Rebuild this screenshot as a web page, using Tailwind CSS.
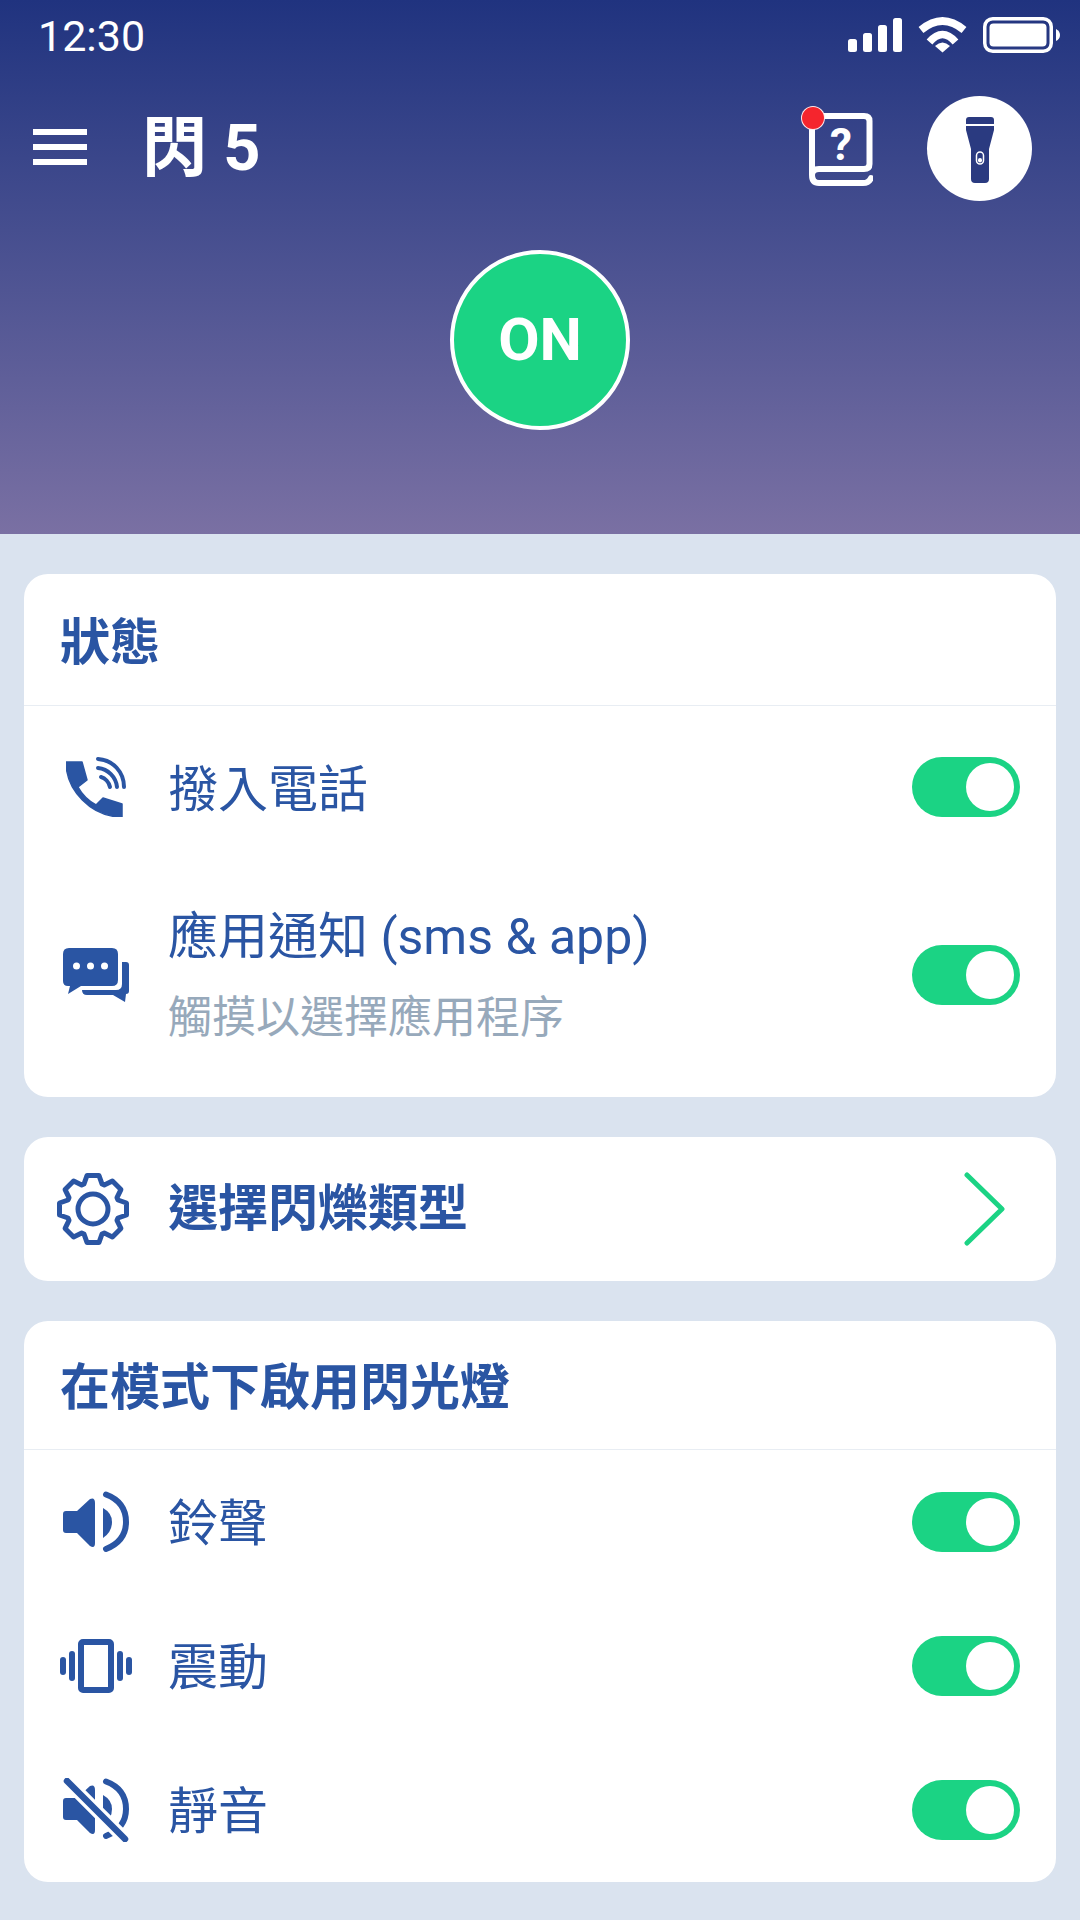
<!DOCTYPE html>
<html lang="zh-Hant">
<head>
    <meta charset="UTF-8">
    <meta name="viewport" content="width=device-width, initial-scale=1.0">
    <title>閃 5</title>
    <script src="https://cdn.jsdelivr.net/npm/@tailwindcss/browser@4"></script>
</head>
<body class="w-[1080px] h-[1920px] overflow-hidden bg-[#dae3ef] text-[#2a55a3] font-['Roboto','Noto_Sans_CJK_TC',sans-serif]">

    <!-- Header -->
    <header class="h-[534px] flex flex-col bg-linear-to-b from-[#20337f] to-[#7a70a3] text-white">
        <!-- Status bar -->
        <div class="h-[68px] flex items-center justify-between pl-[38px] pr-[20px]">
            <span class="pt-[5px] text-[43px] leading-none">12:30</span>
            <div class="flex items-center pt-[2px]">
                <svg width="54" height="34" viewBox="0 0 54 34" fill="#fff">
                    <rect x="0" y="21" width="9" height="13" rx="2.5"/>
                    <rect x="15" y="15" width="9" height="19" rx="2.5"/>
                    <rect x="30" y="7" width="9" height="27" rx="2.5"/>
                    <rect x="45" y="0" width="9" height="34" rx="2.5"/>
                </svg>
                <svg class="ml-[16px]" width="49" height="36" viewBox="0 0 49 36" fill="none" stroke="#fff" stroke-width="7.500" stroke-linejoin="round">
                    <path d="M3 13 Q24.500 -5 46 13"/>
                    <path d="M11.500 25 Q24.500 10 37.500 25"/>
                    <path d="M17 29 Q24.500 22 32 29 L24.500 35.500Z" fill="#fff" stroke="none"/>
                </svg>
                <svg class="ml-[16px]" width="77" height="36" viewBox="0 0 77 36">
                    <rect x="1.750" y="1.750" width="66.500" height="32.500" rx="8" fill="none" stroke="#fff" stroke-width="3.500"/>
                    <rect x="6.500" y="6.500" width="57" height="23" rx="4" fill="#fff"/>
                    <path d="M73 12 Q77 14 77 18 Q77 22 73 24Z" fill="#fff"/>
                </svg>
            </div>
        </div>

        <!-- Toolbar -->
        <div class="mt-[28px] h-[105px] flex items-center pl-[33px] pr-[48px]">
            <button class="w-[54px] mb-[3px] flex flex-col gap-[9px]">
                <span class="h-[6px] bg-white"></span>
                <span class="h-[6px] bg-white"></span>
                <span class="h-[6px] bg-white"></span>
            </button>
            <h1 class="ml-[55px] text-[65px] font-bold leading-none">閃 5</h1>
            <div class="ml-auto relative w-[64px] h-[73px] mt-[2px] mr-[54px]">
                <svg width="64" height="73" viewBox="0 0 64 73" fill="none" stroke="#fff" stroke-width="6" stroke-linecap="round">
                    <path d="M3 8 V62 M8 3 H55 Q60.500 3 60.500 8 V51 Q60.500 56 55 56 H10 Q3 56 3 62 Q3 70 10 70 H54 Q60 70 62 65"/>
                </svg>
                <span class="absolute left-[16px] top-[7px] w-[32px] text-center text-[44px] font-bold leading-[50px]">?</span>
                <span class="absolute left-[-8px] top-[-7px] w-[24px] h-[24px] rounded-full bg-[#f5252d] border border-white/90"></span>
            </div>
            <button class="w-[105px] h-[105px] rounded-full bg-white flex items-center justify-center">
                <svg class="mt-[3px]" width="28" height="66" viewBox="0 0 28 66" fill="#2a3a80">
                    <path d="M0 3 Q0 0 3 0 H25 Q28 0 28 3 V7 H0Z"/>
                    <path d="M0 9 H28 V13 L23 32 V62 Q23 66 19 66 H9 Q5 66 5 62 V32 L0 13Z"/>
                    <rect x="10.500" y="35" width="7" height="12" rx="3.500" fill="none" stroke="#fff" stroke-width="1.500"/>
                    <rect x="12" y="41" width="4" height="4.500" rx="2" fill="#fff"/>
                </svg>
            </button>
        </div>

        <!-- Master switch -->
        <button class="mt-[49px] mx-auto w-[180px] h-[180px] rounded-full bg-[#1bd384] border-[4px] border-white text-[60px] font-bold">ON</button>
    </header>

    <main class="px-[24px] pt-[40px] flex flex-col gap-[40px]">
        <!-- 狀態 -->
        <section class="bg-white rounded-[24px] pb-[15px]">
            <h2 class="h-[132px] flex items-center pl-[36px] pt-[8px] border-b border-[#e8edf3] text-[50px] font-bold">狀態</h2>
            <div class="h-[162px] flex items-center pr-[36px]">
                <div class="w-[144px] pl-[42px]">
                    <svg width="60" height="60" viewBox="0 0 60 60" fill="#2a55a3">
                        <path d="M0 5 H16 L21 23 L12 30 Q18 41 30 48 L37 41 L56 47 V60 C25 60 0 33 0 5Z" stroke="#2a55a3" stroke-width="1.500" stroke-linejoin="round"/>
                        <g fill="none" stroke="#2a55a3" stroke-width="4" stroke-linecap="round">
                            <path d="M32 2 C47 3 58 15 58 30"/>
                            <path d="M32 11 C42 12 50 20 51 30"/>
                            <path d="M35 20 C39 21 43 25 44 30"/>
                        </g>
                    </svg>
                </div>
                <span class="pt-[6px] text-[50px] leading-none">撥入電話</span>
                <div class="ml-auto w-[108px] h-[60px] rounded-full bg-[#1bd384] flex items-center justify-end pr-[6px]"><span class="w-[48px] h-[48px] rounded-full bg-white"></span></div>
            </div>
            <div class="h-[214px] flex items-center pr-[36px]">
                <div class="w-[144px] pl-[39px]">
                    <svg width="66" height="54" viewBox="0 0 66 54" fill="#2a55a3">
                        <path d="M6 0 H49 Q55 0 55 6 V32 Q55 38 49 38 H18 L5 46 L7 38 H5 Q0 38 0 33 V6 Q0 0 6 0Z"/>
                        <path d="M59 14 H63 Q66 14 66 17 V43 Q66 46 63 46 L62 54 L50 47 H24 Q19 47 19 42 H53 Q59 42 59 36Z"/>
                        <circle cx="13.500" cy="18" r="3.500" fill="#fff"/>
                        <circle cx="27.500" cy="18" r="3.500" fill="#fff"/>
                        <circle cx="41.500" cy="18" r="3.500" fill="#fff"/>
                    </svg>
                </div>
                <div class="flex flex-col">
                    <span class="text-[50px] leading-[60px]">應用通知 (sms &amp; app)</span>
                    <span class="mt-[25px] text-[44px] leading-[52px] text-[#97a9bb]">觸摸以選擇應用程序</span>
                </div>
                <div class="ml-auto w-[108px] h-[60px] rounded-full bg-[#1bd384] flex items-center justify-end pr-[6px]"><span class="w-[48px] h-[48px] rounded-full bg-white"></span></div>
            </div>
        </section>

        <!-- 選擇閃爍類型 -->
        <section class="h-[144px] bg-white rounded-[24px] flex items-center pr-[50px]">
            <div class="w-[144px] pl-[33px]">
                <svg width="72" height="72" viewBox="-36 -36 72 72" fill="none" stroke="#2a55a3" stroke-width="5" stroke-linejoin="round">
                    <polygon points="-9,-25 -6,-33.500 6,-33.500 9,-25 11.300,-24 19.400,-27.900 27.900,-19.400 24,-11.300 25,-9 33.500,-6 33.500,6 25,9 24,11.300 27.900,19.400 19.400,27.900 11.300,24 9,25 6,33.500 -6,33.500 -9,25 -11.300,24 -19.400,27.900 -27.900,19.400 -24,11.300 -25,9 -33.500,6 -33.500,-6 -25,-9 -24,-11.300 -27.900,-19.400 -19.400,-27.900 -11.300,-24"/>
                    <circle cx="0" cy="0" r="15"/>
                </svg>
            </div>
            <span class="text-[50px] font-bold leading-none">選擇閃爍類型</span>
            <svg class="ml-auto" width="42" height="76" viewBox="0 0 42 76" fill="none" stroke="#1bd384" stroke-width="5" stroke-linecap="round" stroke-linejoin="round">
                <path d="M3 4 L38 38 L3 72"/>
            </svg>
        </section>

        <!-- 在模式下啟用閃光燈 -->
        <section class="bg-white rounded-[24px]">
            <h2 class="h-[129px] flex items-center pl-[36px] pt-[6px] border-b border-[#e8edf3] text-[50px] font-bold">在模式下啟用閃光燈</h2>
            <div class="h-[144px] flex items-center pr-[36px]">
                <div class="w-[144px] pl-[39px]">
                    <svg width="66" height="62" viewBox="0 0 66 62" fill="#2a55a3">
                        <path d="M3 20 H14 L27 8 Q32 6 32 12 V52 Q32 58 27 55 L14 42 H3 Q0 42 0 39 V23 Q0 20 3 20Z"/>
                        <path d="M40 17 Q49 22 49 31 Q49 41 40 47Z"/>
                        <path d="M43 3.500 Q63 11 63 31 Q63 50 43 58" fill="none" stroke="#2a55a3" stroke-width="6" stroke-linecap="round"/>
                    </svg>
                </div>
                <span class="pt-[4px] text-[50px] leading-none">鈴聲</span>
                <div class="ml-auto w-[108px] h-[60px] rounded-full bg-[#1bd384] flex items-center justify-end pr-[6px]"><span class="w-[48px] h-[48px] rounded-full bg-white"></span></div>
            </div>
            <div class="h-[144px] flex items-center pr-[36px]">
                <div class="w-[144px] pl-[36px]">
                    <svg width="72" height="54" viewBox="0 0 72 54" fill="#2a55a3">
                        <rect x="21" y="3" width="30" height="48" rx="2" fill="none" stroke="#2a55a3" stroke-width="6"/>
                        <rect x="9" y="12" width="6" height="30" rx="3"/>
                        <rect x="57" y="12" width="6" height="30" rx="3"/>
                        <rect x="0" y="18" width="6" height="18" rx="3"/>
                        <rect x="66" y="18" width="6" height="18" rx="3"/>
                    </svg>
                </div>
                <span class="pt-[4px] text-[50px] leading-none">震動</span>
                <div class="ml-auto w-[108px] h-[60px] rounded-full bg-[#1bd384] flex items-center justify-end pr-[6px]"><span class="w-[48px] h-[48px] rounded-full bg-white"></span></div>
            </div>
            <div class="h-[144px] flex items-center pr-[36px]">
                <div class="w-[144px] pl-[39px]">
                    <svg width="66" height="64" viewBox="0 0 66 64" fill="#2a55a3">
                        <path d="M3 20 H14 L27 8 Q32 6 32 12 V52 Q32 58 27 55 L14 42 H3 Q0 42 0 39 V23 Q0 20 3 20Z"/>
                        <path d="M40 17 Q49 22 49 31 Q49 41 40 47Z"/>
                        <path d="M43 3.500 Q63 11 63 31 Q63 50 43 58" fill="none" stroke="#2a55a3" stroke-width="6" stroke-linecap="round"/>
                        <path d="M4 3 L62 61" stroke="#fff" stroke-width="13"/>
                        <path d="M4 3 L62 61" stroke="#2a55a3" stroke-width="6.500" stroke-linecap="round"/>
                    </svg>
                </div>
                <span class="pt-[4px] text-[50px] leading-none">靜音</span>
                <div class="ml-auto w-[108px] h-[60px] rounded-full bg-[#1bd384] flex items-center justify-end pr-[6px]"><span class="w-[48px] h-[48px] rounded-full bg-white"></span></div>
            </div>
        </section>
    </main>
</body>
</html>
